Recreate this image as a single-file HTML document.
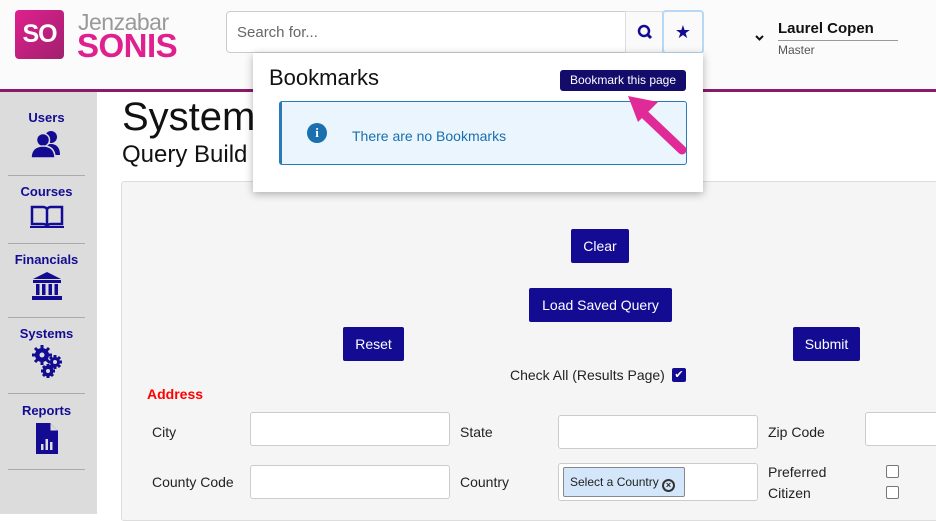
<!DOCTYPE html>
<html><head><meta charset="utf-8"><style>
*{box-sizing:border-box;margin:0;padding:0}
body{width:936px;height:514px;overflow:hidden;background:#fff;font-family:"Liberation Sans",Arial,sans-serif;position:relative}
.hdr{position:absolute;left:0;top:0;width:936px;height:92px;background:#fbfbfb;border-bottom:3px solid #8a1a6c}
.logo{position:absolute;left:15px;top:10px;width:49px;height:49px;border-radius:4px;background:linear-gradient(135deg,#e0208e,#a0206e);color:#fff;font-size:25px;font-weight:bold;text-align:center;line-height:49px;letter-spacing:-1px}
.jz{position:absolute;left:78px;top:9px;font-size:23px;color:#999;letter-spacing:-0.5px}
.so{position:absolute;left:77px;top:27px;font-size:33px;color:#e0208e;font-weight:bold;letter-spacing:-0.5px}
.search{position:absolute;left:226px;top:11px;width:400px;height:42px;border:1px solid #ccc;border-radius:4px 0 0 4px;background:#fff;font-size:15px;color:#666;padding:12px 10px}
.sbtn{position:absolute;left:625px;top:11px;width:38px;height:42px;border:1px solid #ddd;background:#fafafa}
.star{position:absolute;left:662px;top:10px;width:42px;height:44px;border:2px solid #b8d8f4;border-radius:4px;background:#fafafa;color:#130c93;font-size:18px;text-align:center;line-height:40px}
.user{position:absolute;left:778px;top:20px;font-size:15px;font-weight:bold;color:#111;width:120px;border-bottom:1px solid #999;padding-bottom:3px}
.master{position:absolute;left:778px;top:43px;font-size:12px;color:#555}
.side{position:absolute;left:0;top:92px;width:97px;height:422px;background:#dcdcdc}
.si{position:absolute;left:8px;width:77px;text-align:center;color:#130c93;font-size:13px;font-weight:bold;border-bottom:1px solid #aaa}
.h1{position:absolute;left:122px;top:95px;font-size:40px;color:#111}
.h2{position:absolute;left:122px;top:141px;font-size:24px;color:#111}
.panel{position:absolute;left:121px;top:181px;width:830px;height:340px;background:#f5f5f5;border:1px solid #ddd;border-radius:3px}
.btn{position:absolute;background:#130c93;color:#fff;font-size:14px;text-align:center;border-radius:2px}
.lbl{position:absolute;font-size:14px;color:#222}
.inp{position:absolute;background:#fff;border:1px solid #ccc;border-radius:3px;height:34px}
.cb{position:absolute;width:13px;height:13px;border:1px solid #777;border-radius:2px;background:#fff}
.pop{position:absolute;left:253px;top:53px;width:450px;height:139px;background:#fff;box-shadow:0 2px 8px rgba(0,0,0,.3)}
</style></head><body>
<div class="hdr">
<div class="logo">SO</div>
<div class="jz">Jenzabar</div>
<div class="so">SONIS</div>
<div class="search">Search for...</div>
<div class="sbtn"><svg width="38" height="40" viewBox="0 0 38 40"><circle cx="18" cy="19" r="5" fill="none" stroke="#130c93" stroke-width="2.5"/><line x1="21.5" y1="22.5" x2="25" y2="26" stroke="#130c93" stroke-width="3"/></svg></div>
<div class="star">★</div>
<svg style="position:absolute;left:754px;top:34px" width="11" height="8"><path d="M2 2l3.5 3.5 3.5-3.5" stroke="#111" stroke-width="2" fill="none"/></svg>
<div class="user">Laurel Copen</div>
<div class="master">Master</div>
</div>
<div class="side">
<div class="si" style="top:18px;height:66px">Users<br><svg width="36" height="30" viewBox="0 0 36 30" style="margin-top:4px"><circle cx="22" cy="8" r="6" fill="#130c93"/><path d="M13 26c0-8 4-11 9-11s9 3 9 11z" fill="#130c93"/><circle cx="14" cy="11" r="6.5" fill="#130c93" stroke="#dcdcdc" stroke-width="1.5"/><path d="M2 29c0-9 5-12 12-12s12 3 12 12z" fill="#130c93" stroke="#dcdcdc" stroke-width="1.5"/></svg></div>
<div class="si" style="top:92px;height:60px">Courses<br><svg width="34" height="26" viewBox="0 0 34 26" style="margin-top:4px"><path d="M2 4h11c2 0 4 1 4 3v17c0-2-2-3-4-3H2zM32 4H21c-2 0-4 1-4 3v17c0-2 2-3 4-3h11z" fill="none" stroke="#130c93" stroke-width="2.5"/><path d="M0 24h34" stroke="#130c93" stroke-width="2"/></svg></div>
<div class="si" style="top:160px;height:66px">Financials<br><svg width="32" height="30" viewBox="0 0 32 30" style="margin-top:4px"><path d="M16 1L2 8h28z" fill="#130c93"/><rect x="2" y="9" width="28" height="3" fill="#130c93"/><rect x="5" y="13" width="3.5" height="11" fill="#130c93"/><rect x="11" y="13" width="3.5" height="11" fill="#130c93"/><rect x="17.5" y="13" width="3.5" height="11" fill="#130c93"/><rect x="23.5" y="13" width="3.5" height="11" fill="#130c93"/><rect x="1" y="25" width="30" height="4" fill="#130c93"/></svg></div>
<div class="si" style="top:234px;height:68px">Systems<br><svg width="34" height="36" viewBox="0 0 34 36" style="margin-top:3px"><g fill="#130c93"><circle cx="12" cy="11" r="7"/><circle cx="25" cy="18" r="5"/><circle cx="18" cy="27" r="5.5"/></g><g stroke="#130c93" stroke-width="3"><path d="M12 1v20M2 11h20M5 4l14 14M19 4L5 18"/><path d="M25 11v14M18 18h14M20 13l10 10M30 13L20 23"/><path d="M18 20v14M11 27h14M13 22l10 10M23 22L13 32"/></g><g fill="#dcdcdc"><circle cx="12" cy="11" r="2.5"/><circle cx="25" cy="18" r="2"/><circle cx="18" cy="27" r="2"/></g></svg></div>
<div class="si" style="top:311px;height:67px">Reports<br><svg width="24" height="33" viewBox="0 0 24 33" style="margin-top:4px"><path d="M1 1h14l8 8v23H1z" fill="#130c93"/><path d="M15 1v8h8" fill="#dcdcdc" stroke="#130c93"/><rect x="6" y="22" width="2.5" height="6" fill="#dcdcdc"/><rect x="10.5" y="17" width="2.5" height="11" fill="#dcdcdc"/><rect x="15" y="20" width="2.5" height="8" fill="#dcdcdc"/></svg></div>
</div>
<div class="h1">System</div>
<div class="h2">Query Build</div>
<div class="panel"></div>
<div class="btn" style="left:571px;top:229px;width:58px;height:34px;line-height:34px">Clear</div>
<div class="btn" style="left:529px;top:288px;width:143px;height:34px;line-height:34px">Load Saved Query</div>
<div class="btn" style="left:343px;top:327px;width:61px;height:34px;line-height:34px">Reset</div>
<div class="btn" style="left:793px;top:327px;width:67px;height:34px;line-height:34px">Submit</div>
<div class="lbl" style="left:510px;top:367px">Check All (Results Page)</div>
<div style="position:absolute;left:672px;top:368px;width:14px;height:14px;background:#130c93;border-radius:2px;color:#fff;font-size:11px;text-align:center;line-height:14px">✔</div>
<div class="lbl" style="left:147px;top:386px;color:#f00;font-weight:bold">Address</div>
<div class="lbl" style="left:152px;top:424px">City</div>
<div class="inp" style="left:250px;top:412px;width:200px"></div>
<div class="lbl" style="left:460px;top:424px">State</div>
<div class="inp" style="left:558px;top:415px;width:200px"></div>
<div class="lbl" style="left:768px;top:424px">Zip Code</div>
<div class="inp" style="left:865px;top:412px;width:80px"></div>
<div class="lbl" style="left:152px;top:474px">County Code</div>
<div class="inp" style="left:250px;top:465px;width:200px"></div>
<div class="lbl" style="left:460px;top:474px">Country</div>
<div class="inp" style="left:558px;top:463px;width:200px;height:38px"></div>
<div style="position:absolute;left:563px;top:467px;width:122px;height:30px;background:#d4e7fa;border:1px solid #888;border-radius:2px;font-size:12px;color:#222;padding:7px 6px">Select a Country <span style="display:inline-block;width:13px;height:13px;border:2px solid #333;border-radius:50%;font-size:9px;line-height:9px;text-align:center;font-weight:bold;vertical-align:-2px">×</span></div>
<div class="lbl" style="left:768px;top:464px">Preferred</div>
<div class="lbl" style="left:768px;top:485px">Citizen</div>
<div class="cb" style="left:886px;top:465px"></div>
<div class="cb" style="left:886px;top:486px"></div>
<div class="pop">
<div style="position:absolute;left:16px;top:12px;font-size:22px;color:#111">Bookmarks</div>
<div style="position:absolute;left:307px;top:17px;width:126px;height:21px;background:#130c6b;color:#fff;font-size:12px;border-radius:3px;text-align:center;line-height:21px">Bookmark this page</div>
<div style="position:absolute;left:26px;top:48px;width:408px;height:64px;background:#eaf5fd;border:1px solid #2a7bb5;border-left:3px solid #2a7bb5;border-radius:3px">
<div style="position:absolute;left:25px;top:21px;width:20px;height:20px;border-radius:50%;background:#1a6fae;color:#fff;font-weight:bold;font-size:13px;text-align:center;line-height:20px;font-family:'Liberation Serif',serif">i</div>
<div style="position:absolute;left:70px;top:26px;font-size:14px;color:#1a6fae">There are no Bookmarks</div>
</div>
</div>
<svg style="position:absolute;left:620px;top:88px" width="72" height="70"><path d="M62 62L22 24" stroke="#e02a98" stroke-width="9" stroke-linecap="round"/><path d="M8 8L38 14L18 34z" fill="#e02a98"/></svg>
</body></html>
